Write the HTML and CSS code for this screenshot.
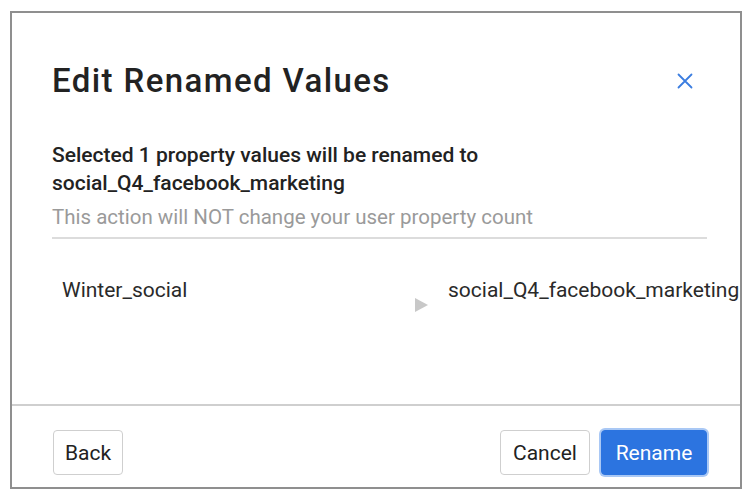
FILE: index.html
```html
<!DOCTYPE html>
<html>
<head>
<meta charset="utf-8">
<link rel="stylesheet" href="styles.css">
</head>
<body>
<div class="modal">
  <div class="modal-body">
    <div class="header">
      <h1 class="title">Edit Renamed Values</h1>
      <button class="close" aria-label="Close">
        <svg width="16" height="16" viewBox="0 0 16 16"><path d="M1.5 1.5 L14.5 14.5 M14.5 1.5 L1.5 14.5" stroke="#3b7de0" stroke-width="1.8" stroke-linecap="round"/></svg>
      </button>
    </div>
    <p class="lead">Selected 1 property values will be renamed to<br>social_Q4_facebook_marketing</p>
    <p class="note">This action will NOT change your user property count</p>
    <div class="row">
      <span class="from">Winter_social</span>
      <span class="arrow"></span>
      <span class="to">social_Q4_facebook_marketing</span>
    </div>
  </div>
  <div class="footer">
    <button class="btn back">Back</button>
    <div class="right">
      <button class="btn cancel">Cancel</button>
      <button class="btn primary">Rename</button>
    </div>
  </div>
</div>
</body>
</html>
```
FILE: styles.css
```css
html, body { margin: 0; padding: 0; background: #fff; }
body { font-family: Roboto, "Liberation Sans", sans-serif; color: #222; }
.modal {
  margin: 11px 0 0 10px;
  width: 732px;
  height: 478px;
  box-sizing: border-box;
  border: 2px solid #8f8f8f;
  display: flex;
  flex-direction: column;
  overflow: hidden;
}
.modal-body { flex: 1; padding: 0 33px 0 40px; }
.header { display: flex; justify-content: space-between; align-items: center; margin-top: 48px; height: 40px; }
.title { margin: 0; font-size: 33px; font-weight: 500; color: #222; letter-spacing: 1.4px; line-height: 40px; }
.close { border: none; background: none; padding: 0; margin-right: 14px; width: 16px; height: 16px; display: flex; }
.lead { margin: 40px 0 0; font-size: 21px; font-weight: 500; line-height: 28px; color: #222; }
.note { margin: 6px 0 0; font-size: 20.5px; color: #9a9a9a; padding-bottom: 6px; border-bottom: 2px solid #dcdcdc; line-height: 28px; }
.row { display: flex; margin-top: 37px; margin-left: 10px; font-size: 21px; line-height: 28px; color: #2a2a2a; white-space: nowrap; }
.from { width: 353px; flex: none; }
.arrow { flex: none; width: 0; height: 0; border-top: 7px solid transparent; border-bottom: 7px solid transparent; border-left: 13px solid #c8c8c8; margin-top: 22px; margin-right: 20px; }
.footer { height: 83px; border-top: 2px solid #cfcfcf; box-sizing: border-box; display: flex; justify-content: space-between; align-items: flex-start; padding: 24px 33px 0 41px; }
.right { display: flex; gap: 11px; }
.btn { font-family: inherit; font-size: 21px; color: #222; background: #fff; border: 1px solid #cfcfcf; border-radius: 4px; height: 45px; padding: 0; text-align: center; }
.back { width: 70px; }
.cancel { width: 90px; }
.primary { width: 106px; background: #2c74e0; color: #fff; border-color: #2c74e0; box-shadow: 0 0 0 2px #a9c8f5; }
```
